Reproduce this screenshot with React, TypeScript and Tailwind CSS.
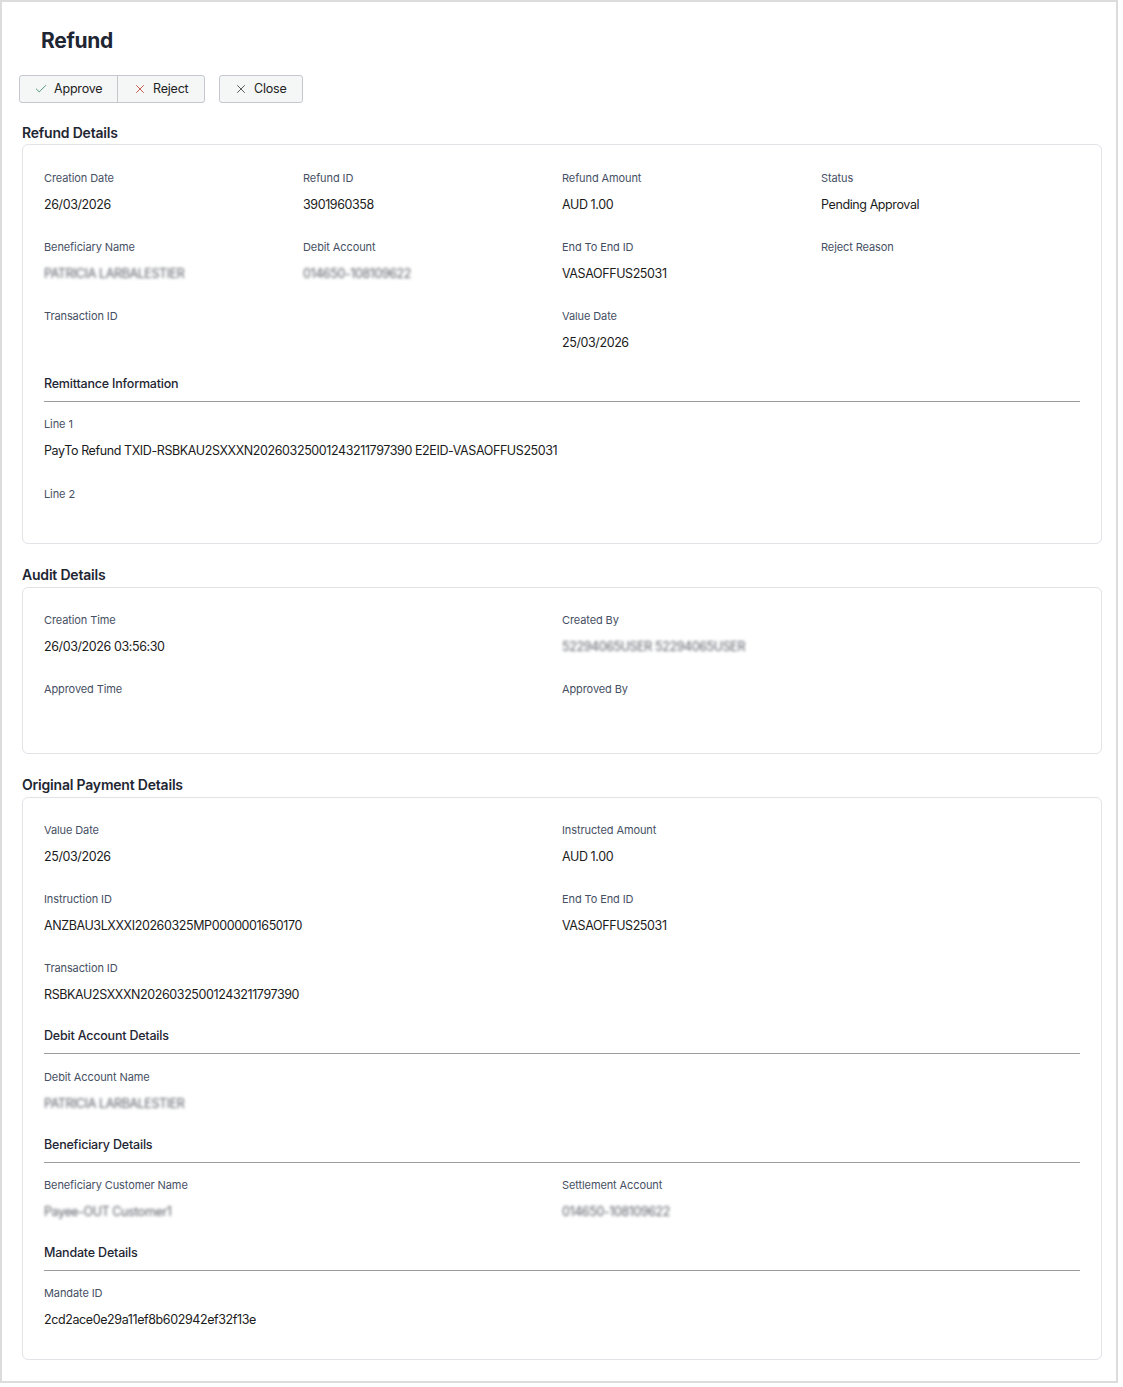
import { Check, X } from "lucide-react";

type Field = { label: string; value?: string; blur?: boolean; span?: string };

function FieldItem({ label, value, blur, span }: Field) {
  return (
    <div className={span ?? ""}>
      <div className="text-[11px] leading-[14px] text-[#465064] tracking-[-0.1px]">{label}</div>
      <div
        className={
          "mt-[12px] min-h-[16px] text-[12.5px] leading-[16px] tracking-[-0.4px] " +
          (blur ? "blur-[1.6px] text-[#5c6068] select-none" : "text-[#1b1b1b]")
        }
      >
        {value ?? ""}
      </div>
    </div>
  );
}

function SubHeading({ title, after = 15 }: { title: string; after?: number }) {
  return (
    <div className={"mt-[25px] " + (after === 16 ? "mb-[16px]" : "mb-[15px]")}>
      <div className="text-[12.5px] leading-[16px] font-medium tracking-[-0.2px] text-[#1f2633] pb-[9px] border-b border-[#9a9ca0]">
        {title}
      </div>
    </div>
  );
}

function SectionTitle({ title, first }: { title: string; first?: boolean }) {
  return (
    <h2
      className={
        "text-[14px] leading-[18px] font-semibold text-[#1f2633] tracking-[-0.2px] " +
        (first ? "mt-[21px] mb-[2px]" : "mt-[22px] mb-[3px]")
      }
    >
      {title}
    </h2>
  );
}

export default function App() {
  return (
    <div
      className="w-[1118px] h-[1383px] border-2 border-[#dcdcdc] bg-white pl-[20px] pr-[14px]"
      style={{ fontFamily: "Inter, 'Liberation Sans', sans-serif" }}
    >
      <h1 className="pl-[19px] pt-[27px] text-[21px] leading-[24px] font-bold text-[#1f2633] tracking-[-0.3px]">
        Refund
      </h1>

      {/* Toolbar */}
      <div className="mt-[22px] -ml-[3px] flex items-center gap-[14px]">
        <div className="flex h-[28px] rounded-[3px] border border-[#c4c8cc] bg-[#f5f7f7] overflow-hidden">
          <button className="flex items-center gap-[6px] w-[98px] pl-[14px] text-[12.5px] tracking-[-0.2px] text-[#222] border-r border-[#c4c8cc]">
            <Check className="w-[14px] h-[14px] text-[#3d8b63]" strokeWidth={1.5} />
            Approve
          </button>
          <button className="flex items-center gap-[6px] w-[86px] pl-[15px] text-[12.5px] tracking-[-0.2px] text-[#222]">
            <X className="w-[14px] h-[14px] text-[#c0463c]" strokeWidth={1.5} />
            Reject
          </button>
        </div>
        <button className="flex items-center gap-[6px] h-[28px] w-[84px] pl-[14px] rounded-[3px] border border-[#c4c8cc] bg-[#f5f7f7] text-[12.5px] tracking-[-0.2px] text-[#222]">
          <X className="w-[14px] h-[14px] text-[#444]" strokeWidth={1.5} />
          Close
        </button>
      </div>

      {/* Refund Details */}
      <SectionTitle title="Refund Details" first />
      <div className="rounded-[6px] border border-[#e1e3e7] px-[21px] pt-[26px] pb-[14px]">
        <div className="grid grid-cols-4 gap-y-[27px]">
          <FieldItem label="Creation Date" value="26/03/2026" />
          <FieldItem label="Refund ID" value="3901960358" />
          <FieldItem label="Refund Amount" value="AUD 1.00" />
          <FieldItem label="Status" value="Pending Approval" />
          <FieldItem label="Beneficiary Name" value="PATRICIA LARBALESTIER" blur />
          <FieldItem label="Debit Account" value="014650-108109622" blur />
          <FieldItem label="End To End ID" value="VASAOFFUS25031" />
          <FieldItem label="Reject Reason" />
          <FieldItem label="Transaction ID" span="col-span-2" />
          <FieldItem label="Value Date" value="25/03/2026" span="col-span-2" />
        </div>
        <SubHeading title="Remittance Information" />
        <div className="flex flex-col gap-y-[28px]">
          <FieldItem
            label="Line 1"
            value="PayTo Refund TXID-RSBKAU2SXXXN20260325001243211797390 E2EID-VASAOFFUS25031"
          />
          <FieldItem label="Line 2" />
        </div>
      </div>

      {/* Audit Details */}
      <SectionTitle title="Audit Details" />
      <div className="rounded-[6px] border border-[#e1e3e7] px-[21px] pt-[25px] pb-[29px]">
        <div className="grid grid-cols-2 gap-y-[27px]">
          <FieldItem label="Creation Time" value="26/03/2026 03:56:30" />
          <FieldItem label="Created By" value="52294065USER 52294065USER" blur />
          <FieldItem label="Approved Time" />
          <FieldItem label="Approved By" />
        </div>
      </div>

      {/* Original Payment Details */}
      <SectionTitle title="Original Payment Details" />
      <div className="rounded-[6px] border border-[#e1e3e7] px-[21px] pt-[25px] pb-[31px]">
        <div className="grid grid-cols-2 gap-y-[27px]">
          <FieldItem label="Value Date" value="25/03/2026" />
          <FieldItem label="Instructed Amount" value="AUD 1.00" />
          <FieldItem label="Instruction ID" value="ANZBAU3LXXXI20260325MP0000001650170" />
          <FieldItem label="End To End ID" value="VASAOFFUS25031" />
          <FieldItem label="Transaction ID" value="RSBKAU2SXXXN20260325001243211797390" span="col-span-2" />
        </div>
        <SubHeading title="Debit Account Details" after={16} />
        <div className="grid grid-cols-2 gap-y-[27px]">
          <FieldItem label="Debit Account Name" value="PATRICIA LARBALESTIER" blur />
        </div>
        <SubHeading title="Beneficiary Details" />
        <div className="grid grid-cols-2 gap-y-[27px]">
          <FieldItem label="Beneficiary Customer Name" value="Payee-OUT Customer1" blur />
          <FieldItem label="Settlement Account" value="014650-108109622" blur />
        </div>
        <SubHeading title="Mandate Details" />
        <div className="grid grid-cols-2 gap-y-[27px]">
          <FieldItem label="Mandate ID" value="2cd2ace0e29a11ef8b602942ef32f13e" />
        </div>
      </div>
    </div>
  );
}
